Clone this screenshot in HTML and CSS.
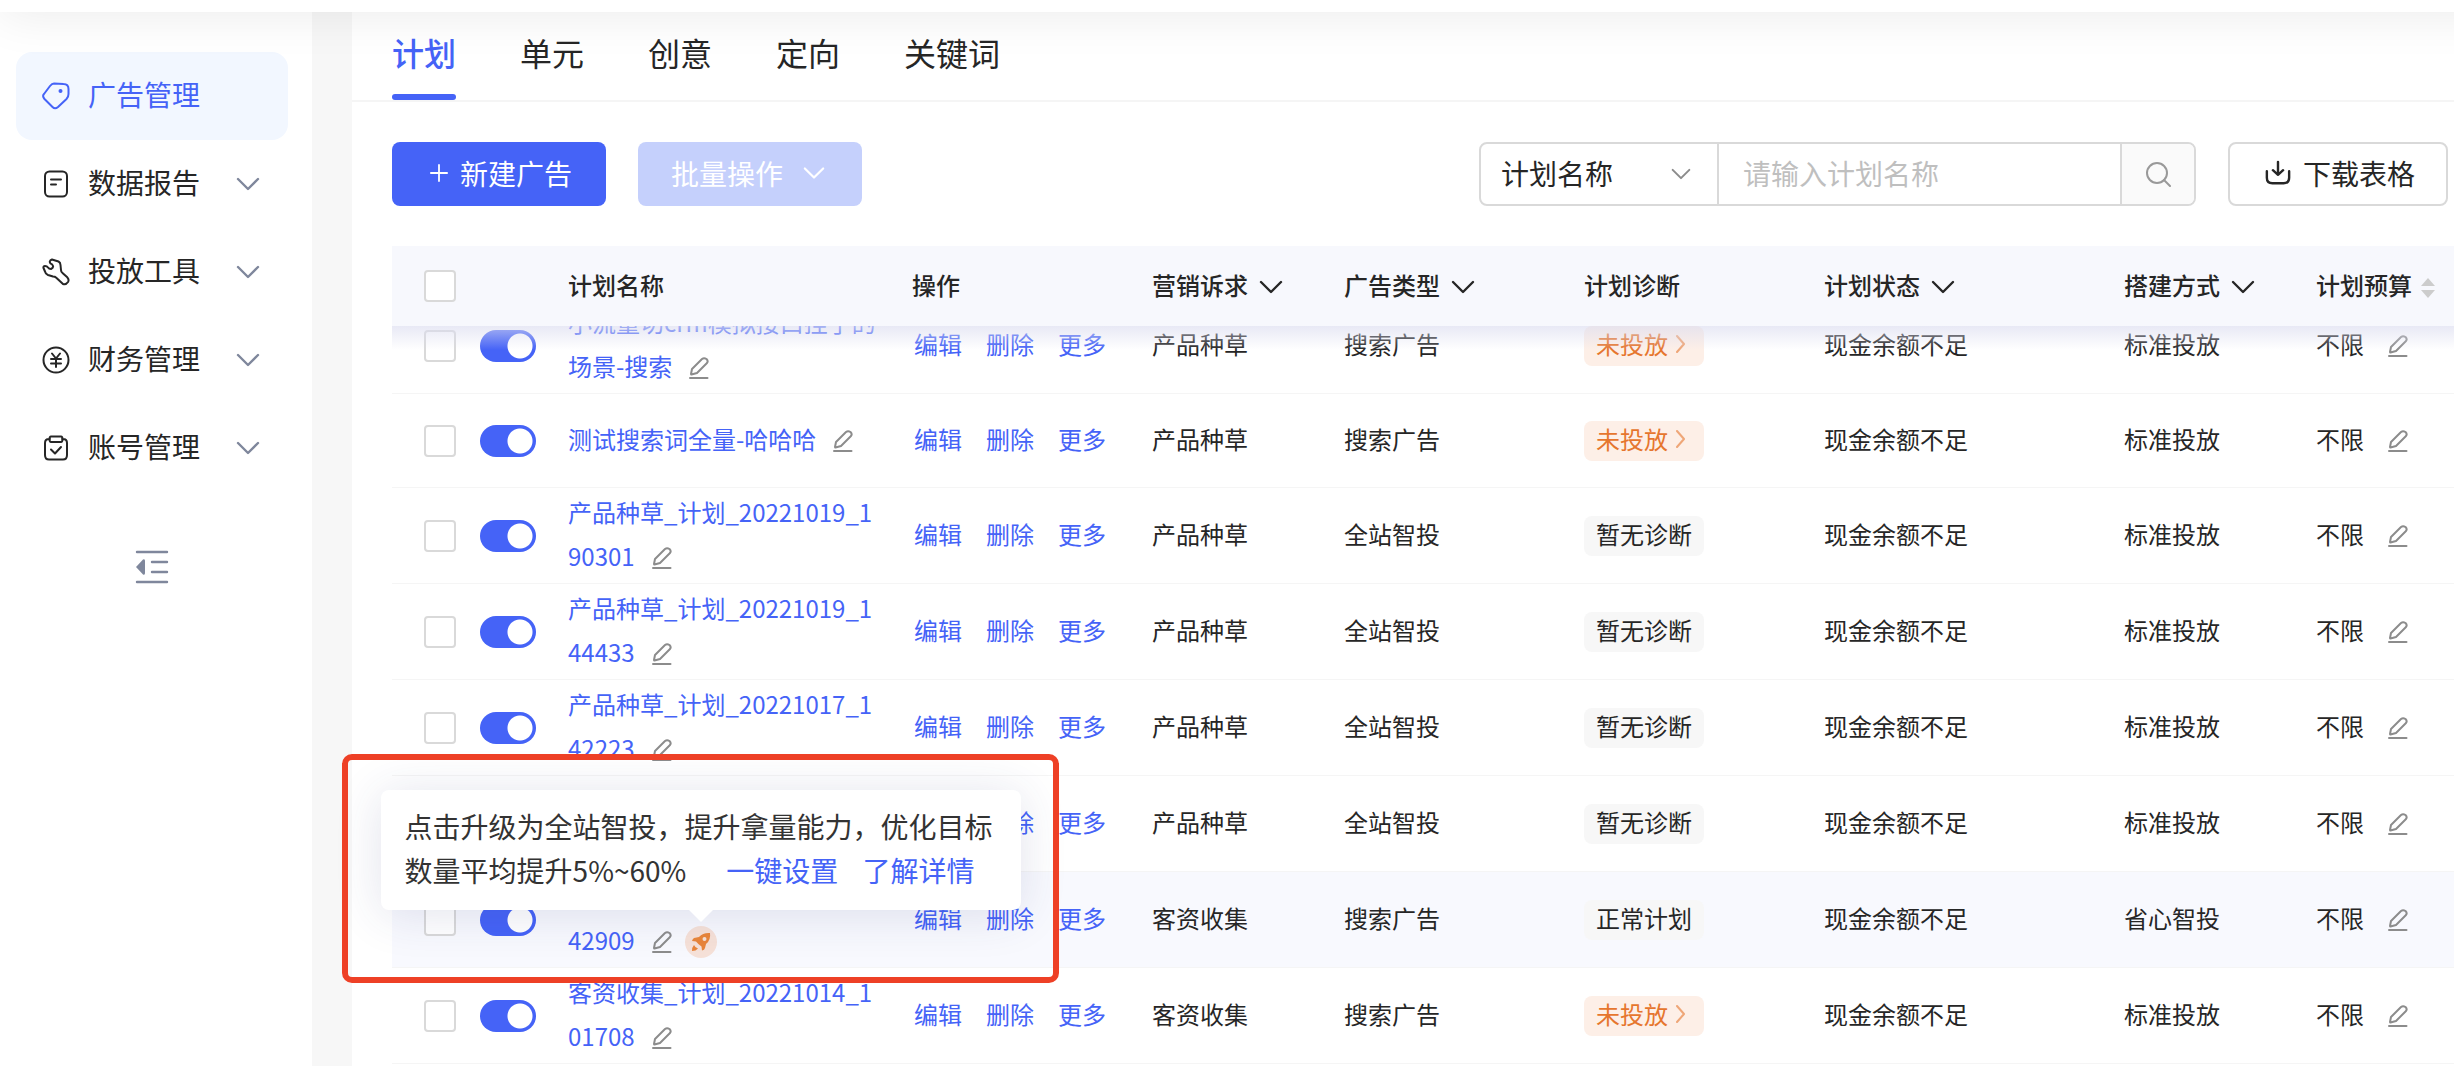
FILE: index.html
```html
<!DOCTYPE html>
<html lang="zh-CN">
<head>
<meta charset="utf-8">
<title>广告管理</title>
<meta name="viewport" content="width=device-width, initial-scale=1">
<link rel="stylesheet" href="styles.css">
</head>
<body>
<svg class="sprite" aria-hidden="true">
  <symbol id="i-chevron" viewBox="0 0 24 24"><path stroke-width="2.4" d="M2 7l10 10L22 7"/></symbol>
  <symbol id="i-right" viewBox="0 0 10 18"><path d="M1 1l7 8-7 8"/></symbol>
  <symbol id="i-edit" viewBox="0 0 20 22"><path d="M3 12L13 2Q15 .5 17.500 2Q19.500 4 18 6L8 16L2.500 17.500Q2 17.500 2 17ZM1 21H18.500"/></symbol>
  <symbol id="i-tag" viewBox="0 0 28 28"><path d="M12 1.500L21.500 2C24.500 2 26.500 4 26.500 7V12Q26.500 15 24.500 17L16 25Q13 27.500 10.500 25L2.500 17Q0 14 2 12L8 4Q10 1.500 12 1.500Z"/><circle class="dot" cx="18.500" cy="9" r="2"/></symbol>
  <symbol id="i-report" viewBox="0 0 28 28"><rect x="3" y="1.500" width="22" height="25" rx="4.500"/><path d="M9 9.500H19M9 14.500H14"/></symbol>
  <symbol id="i-tool" viewBox="0 0 28 28"><path d="M10 1.500L16.500 3.500Q18.500 4.500 18.500 7L19 12Q19 14 20.500 15L25 19Q27.500 21.500 26 24Q24 27 21 26L14 19.500Q13 18.500 11 18.500L6 17Q3.500 16 3 13.500L1.500 10Q1 8 3 8Q5 8 6 9.500T9 11Q11.500 10 11 8T8.500 5.500Q6.500 3 10 1.500Z"/></symbol>
  <symbol id="i-money" viewBox="0 0 28 28"><circle cx="14" cy="14" r="12.500"/><path d="M10 7.500L14 12.500L18 7.500M9 13H19M9 17.500H19M14 12.500V21"/></symbol>
  <symbol id="i-account" viewBox="0 0 28 28"><path d="M8 5H7Q3 5 3 9V21Q3 25.500 7 25.500H21Q25 25.500 25 21V9Q25 5 21 5H20M9 2.500H19Q20.500 2.500 20.500 5Q20.500 8 19 8H9Q7.500 8 7.500 5Q7.500 2.500 9 2.500ZM9 15.500L13 19.500L19 13"/></symbol>
  <symbol id="i-collapse" viewBox="0 0 34 34"><path stroke-width="2.400" d="M2 2H32M17 12H32M17 22H32M2 32H32"/><path class="solid" d="M1 17L8 9.500Q10 8.500 10 11V23Q10 25.500 8 24.500Z"/></symbol>
  <symbol id="i-plus" viewBox="0 0 20 20"><path d="M10 1V19M1 10H19"/></symbol>
  <symbol id="i-search" viewBox="0 0 26 26"><circle cx="12" cy="12" r="10"/><path d="M19 19L25 25"/></symbol>
  <symbol id="i-download" viewBox="0 0 28 28"><path stroke-width="2.600" d="M2 12V19Q2 25 8 25H20Q26 25 26 19V12M14 2V16M8.500 11L14 16L19.500 11"/></symbol>
  <symbol id="i-rocket" viewBox="0 0 20 20"><path d="M19 1Q12 .5 8 5L3 6Q1.500 7 1 9L5 9.500Q7 12 10.500 14.500L11 18.500Q13.500 18 14 16L15 12Q20 8 19 1ZM13.500 5A2 2 0 1 1 13.500 9A2 2 0 1 1 13.500 5ZM3 13Q1 15 1 19Q5 19 7 16.500Q4 15.500 3 13Z"/></symbol>
  <symbol id="i-sort" viewBox="0 0 14 20"><path d="M7 0L14 8H0ZM0 12H14L7 20Z"/></symbol>
</svg>

<header class="topbar"></header>

<div class="shell">
  <aside class="sidebar">
    <nav class="menu">
      <a class="menu-item active" href="#ads"><svg class="icon menu-icon"><use href="#i-tag"/></svg><span>广告管理</span></a>
      <a class="menu-item" href="#report"><svg class="icon menu-icon"><use href="#i-report"/></svg><span>数据报告</span><svg class="icon menu-arrow"><use href="#i-chevron"/></svg></a>
      <a class="menu-item" href="#tools"><svg class="icon menu-icon"><use href="#i-tool"/></svg><span>投放工具</span><svg class="icon menu-arrow"><use href="#i-chevron"/></svg></a>
      <a class="menu-item" href="#finance"><svg class="icon menu-icon"><use href="#i-money"/></svg><span>财务管理</span><svg class="icon menu-arrow"><use href="#i-chevron"/></svg></a>
      <a class="menu-item" href="#account"><svg class="icon menu-icon"><use href="#i-account"/></svg><span>账号管理</span><svg class="icon menu-arrow"><use href="#i-chevron"/></svg></a>
    </nav>
    <button class="collapse" type="button" aria-label="收起菜单"><svg class="icon"><use href="#i-collapse"/></svg></button>
  </aside>

  <main class="main">
    <nav class="tabs">
      <a class="tab active" href="#plan">计划</a>
      <a class="tab" href="#unit">单元</a>
      <a class="tab" href="#creative">创意</a>
      <a class="tab" href="#target">定向</a>
      <a class="tab" href="#keyword">关键词</a>
    </nav>

    <div class="toolbar">
      <button class="btn primary" type="button"><svg class="icon plus"><use href="#i-plus"/></svg>新建广告</button>
      <button class="btn batch" type="button" disabled>批量操作<svg class="icon btn-arrow"><use href="#i-chevron"/></svg></button>
      <form class="search">
        <span class="field">
          <select aria-label="搜索字段"><option>计划名称</option></select>
          <svg class="icon field-arrow"><use href="#i-chevron"/></svg>
        </span>
        <input type="text" placeholder="请输入计划名称" aria-label="计划名称">
        <button type="button" aria-label="搜索"><svg class="icon"><use href="#i-search"/></svg></button>
      </form>
      <button class="btn download" type="button"><svg class="icon"><use href="#i-download"/></svg>下载表格</button>
    </div>

    <div class="grid">
      <div class="grid-head">
        <table>
          <colgroup><col class="c-check"><col class="c-switch"><col class="c-name"><col class="c-ops"><col class="c-goal"><col class="c-type"><col class="c-diag"><col class="c-state"><col class="c-build"><col></colgroup>
          <thead>
            <tr>
              <th class="control"><input class="check" type="checkbox" aria-label="全选"></th>
              <th></th>
              <th>计划名称</th>
              <th>操作</th>
              <th>营销诉求<svg class="icon th-arrow"><use href="#i-chevron"/></svg></th>
              <th>广告类型<svg class="icon th-arrow"><use href="#i-chevron"/></svg></th>
              <th>计划诊断</th>
              <th>计划状态<svg class="icon th-arrow"><use href="#i-chevron"/></svg></th>
              <th>搭建方式<svg class="icon th-arrow"><use href="#i-chevron"/></svg></th>
              <th>计划预算<svg class="icon sorter"><use href="#i-sort"/></svg></th>
            </tr>
          </thead>
        </table>
      </div>

      <table class="grid-body">
        <colgroup><col class="c-check"><col class="c-switch"><col class="c-name"><col class="c-ops"><col class="c-goal"><col class="c-type"><col class="c-diag"><col class="c-state"><col class="c-build"><col></colgroup>
        <tbody>
          <tr>
            <td class="control"><input class="check" type="checkbox" aria-label="选择计划"></td>
            <td class="control"><input class="switch" type="checkbox" role="switch" aria-label="启用计划" checked></td>
            <td class="name"><a href="#p1">小流量切crm模拟接口挂了的场景-搜索</a><button class="edit" type="button" aria-label="修改名称"><svg class="icon"><use href="#i-edit"/></svg></button></td>
            <td><div class="ops"><a href="#e">编辑</a><a href="#d">删除</a><a href="#m">更多</a></div></td>
            <td>产品种草</td><td>搜索广告</td>
            <td class="control"><a class="badge warn" href="#why">未投放<svg class="icon"><use href="#i-right"/></svg></a></td>
            <td>现金余额不足</td><td>标准投放</td>
            <td>不限<button class="edit" type="button" aria-label="修改预算"><svg class="icon"><use href="#i-edit"/></svg></button></td>
          </tr>
          <tr class="single">
            <td class="control"><input class="check" type="checkbox" aria-label="选择计划"></td>
            <td class="control"><input class="switch" type="checkbox" role="switch" aria-label="启用计划" checked></td>
            <td class="name"><a href="#p2">测试搜索词全量-哈哈哈</a><button class="edit" type="button" aria-label="修改名称"><svg class="icon"><use href="#i-edit"/></svg></button></td>
            <td><div class="ops"><a href="#e">编辑</a><a href="#d">删除</a><a href="#m">更多</a></div></td>
            <td>产品种草</td><td>搜索广告</td>
            <td class="control"><a class="badge warn" href="#why">未投放<svg class="icon"><use href="#i-right"/></svg></a></td>
            <td>现金余额不足</td><td>标准投放</td>
            <td>不限<button class="edit" type="button" aria-label="修改预算"><svg class="icon"><use href="#i-edit"/></svg></button></td>
          </tr>
          <tr>
            <td class="control"><input class="check" type="checkbox" aria-label="选择计划"></td>
            <td class="control"><input class="switch" type="checkbox" role="switch" aria-label="启用计划" checked></td>
            <td class="name"><a href="#p3">产品种草_计划_20221019_190301</a><button class="edit" type="button" aria-label="修改名称"><svg class="icon"><use href="#i-edit"/></svg></button></td>
            <td><div class="ops"><a href="#e">编辑</a><a href="#d">删除</a><a href="#m">更多</a></div></td>
            <td>产品种草</td><td>全站智投</td>
            <td class="control"><span class="badge">暂无诊断</span></td>
            <td>现金余额不足</td><td>标准投放</td>
            <td>不限<button class="edit" type="button" aria-label="修改预算"><svg class="icon"><use href="#i-edit"/></svg></button></td>
          </tr>
          <tr>
            <td class="control"><input class="check" type="checkbox" aria-label="选择计划"></td>
            <td class="control"><input class="switch" type="checkbox" role="switch" aria-label="启用计划" checked></td>
            <td class="name"><a href="#p4">产品种草_计划_20221019_144433</a><button class="edit" type="button" aria-label="修改名称"><svg class="icon"><use href="#i-edit"/></svg></button></td>
            <td><div class="ops"><a href="#e">编辑</a><a href="#d">删除</a><a href="#m">更多</a></div></td>
            <td>产品种草</td><td>全站智投</td>
            <td class="control"><span class="badge">暂无诊断</span></td>
            <td>现金余额不足</td><td>标准投放</td>
            <td>不限<button class="edit" type="button" aria-label="修改预算"><svg class="icon"><use href="#i-edit"/></svg></button></td>
          </tr>
          <tr>
            <td class="control"><input class="check" type="checkbox" aria-label="选择计划"></td>
            <td class="control"><input class="switch" type="checkbox" role="switch" aria-label="启用计划" checked></td>
            <td class="name"><a href="#p5">产品种草_计划_20221017_142223</a><button class="edit" type="button" aria-label="修改名称"><svg class="icon"><use href="#i-edit"/></svg></button></td>
            <td><div class="ops"><a href="#e">编辑</a><a href="#d">删除</a><a href="#m">更多</a></div></td>
            <td>产品种草</td><td>全站智投</td>
            <td class="control"><span class="badge">暂无诊断</span></td>
            <td>现金余额不足</td><td>标准投放</td>
            <td>不限<button class="edit" type="button" aria-label="修改预算"><svg class="icon"><use href="#i-edit"/></svg></button></td>
          </tr>
          <tr>
            <td class="control"><input class="check" type="checkbox" aria-label="选择计划"></td>
            <td class="control"><input class="switch" type="checkbox" role="switch" aria-label="启用计划" checked></td>
            <td class="name"></td>
            <td><div class="ops"><a href="#e">编辑</a><a href="#d">删除</a><a href="#m">更多</a></div></td>
            <td>产品种草</td><td>全站智投</td>
            <td class="control"><span class="badge">暂无诊断</span></td>
            <td>现金余额不足</td><td>标准投放</td>
            <td>不限<button class="edit" type="button" aria-label="修改预算"><svg class="icon"><use href="#i-edit"/></svg></button></td>
          </tr>
          <tr class="hover">
            <td class="control"><input class="check" type="checkbox" aria-label="选择计划"></td>
            <td class="control"><input class="switch" type="checkbox" role="switch" aria-label="启用计划" checked></td>
            <td class="name"><a href="#p7">客资收集_计划_20221014_142909</a><button class="edit" type="button" aria-label="修改名称"><svg class="icon"><use href="#i-edit"/></svg></button><span class="boost"><svg class="rocket"><use href="#i-rocket"/></svg><span class="tip" role="tooltip">点击升级为全站智投，提升拿量能力，优化目标数量平均提升5%~60%<a class="tip-set" href="#set">一键设置</a><a class="tip-more" href="#more">了解详情</a></span></span></td>
            <td><div class="ops"><a href="#e">编辑</a><a href="#d">删除</a><a href="#m">更多</a></div></td>
            <td>客资收集</td><td>搜索广告</td>
            <td class="control"><span class="badge">正常计划</span></td>
            <td>现金余额不足</td><td>省心智投</td>
            <td>不限<button class="edit" type="button" aria-label="修改预算"><svg class="icon"><use href="#i-edit"/></svg></button></td>
          </tr>
          <tr>
            <td class="control"><input class="check" type="checkbox" aria-label="选择计划"></td>
            <td class="control"><input class="switch" type="checkbox" role="switch" aria-label="启用计划" checked></td>
            <td class="name"><a href="#p8">客资收集_计划_20221014_101708</a><button class="edit" type="button" aria-label="修改名称"><svg class="icon"><use href="#i-edit"/></svg></button></td>
            <td><div class="ops"><a href="#e">编辑</a><a href="#d">删除</a><a href="#m">更多</a></div></td>
            <td>客资收集</td><td>搜索广告</td>
            <td class="control"><a class="badge warn" href="#why">未投放<svg class="icon"><use href="#i-right"/></svg></a></td>
            <td>现金余额不足</td><td>标准投放</td>
            <td>不限<button class="edit" type="button" aria-label="修改预算"><svg class="icon"><use href="#i-edit"/></svg></button></td>
          </tr>
        </tbody>
      </table>
      <div class="callout"></div>
    </div>
  </main>
</div>
</body>
</html>
```

FILE: styles.css
```css
:root {
  --blue: #4563f7;
  --text: #262626;
  --line: #d9d9d9;
  --slate: #7f879c;
}

* { box-sizing: border-box; }

body {
  margin: 0;
  height: 100vh;
  overflow: hidden;
  display: flex;
  flex-direction: column;
  background: #f7f7f7;
  color: var(--text);
  font: 24px/44px "Noto Sans CJK SC", "Noto Sans", sans-serif;
}

a { color: inherit; text-decoration: none; }

button, input, select { margin: 0; font: inherit; color: inherit; }

button { border: 0; padding: 0; background: none; }

.sprite { display: none; }

.icon {
  flex: none;
  fill: none;
  stroke: currentColor;
  stroke-width: 2;
  stroke-linecap: round;
  stroke-linejoin: round;
}

.icon .dot, .dot, .solid { fill: currentColor; stroke: none; }

/* the bar is scrolled mostly out of view; only its foot and shadow show */
.topbar {
  flex: none;
  position: relative;
  z-index: 5;
  height: 120px;
  margin: -108px -48px 0 0;
  background: #fff;
  box-shadow: 0 4px 48px rgba(0, 0, 0, .08);
  pointer-events: none;
}

.shell { flex: 1; display: flex; gap: 40px; }

/* sidebar */
.sidebar {
  flex: none;
  width: 312px;
  padding: 40px 24px 0 16px;
  background: #fff;
  display: flex;
  flex-direction: column;
  align-items: center;
}

.menu { width: 100%; font-size: 28px; }

.menu-item {
  display: flex;
  align-items: center;
  gap: 18px;
  height: 88px;
  padding: 0 28px 0 26px;
  border-radius: 16px;
}

.menu-item span { padding-bottom: 4px; }

.menu-item.active { background: #f2f7ff; color: var(--blue); }

.menu-icon { width: 28px; height: 28px; }

.menu-arrow { width: 24px; height: 24px; margin-left: auto; color: var(--slate); }

.collapse { margin-top: 58px; height: 34px; color: var(--slate); }

.collapse svg { display: block; width: 34px; height: 34px; }

/* main */
.main { flex: 1; min-width: 0; background: #fff; }

.tabs {
  display: flex;
  gap: 64px;
  padding-left: 40px;
  border-bottom: 2px solid #f5f5f5;
  font-size: 32px;
}

.tab { position: relative; height: 88px; padding-top: 18px; }

.tab.active { color: var(--blue); font-weight: 500; }

.tab.active::after {
  content: "";
  position: absolute;
  left: 0;
  right: 0;
  bottom: 0;
  height: 6px;
  border-radius: 3px;
  background: var(--blue);
}

.toolbar {
  display: flex;
  align-items: center;
  padding: 40px 6px 40px 40px;
  font-size: 28px;
}

.btn {
  flex: none;
  display: flex;
  align-items: center;
  justify-content: center;
  height: 64px;
  padding-bottom: 3px;
  border-radius: 8px;
}

.primary { width: 214px; gap: 12px; padding-left: 4px; background: var(--blue); color: #fff; }

.plus { width: 18px; height: 18px; }

.batch { width: 224px; gap: 20px; padding-right: 4px; margin-left: 32px; background: #c5d0fc; color: #fff; }

.btn-arrow { width: 22px; height: 22px; }

.search {
  display: flex;
  width: 717px;
  height: 64px;
  margin-left: auto;
  border: 2px solid var(--line);
  border-radius: 8px;
  overflow: hidden;
}

.field { position: relative; flex: none; width: 236px; }

.field select {
  width: 100%;
  height: 100%;
  padding: 0 20px 3px;
  border: 0;
  appearance: none;
  background: none;
}

.field-arrow {
  position: absolute;
  right: 26px;
  top: 20px;
  width: 20px;
  height: 20px;
  color: #8c8c8c;
  pointer-events: none;
}

.search input {
  flex: 1;
  min-width: 0;
  padding: 0 24px 3px;
  border: solid var(--line);
  border-width: 0 2px;
}

.search input::placeholder { color: #bfbfbf; }

.search button {
  flex: none;
  width: 72px;
  display: grid;
  place-items: center;
  background: #fafafa;
  color: #999;
}

.search button svg { width: 26px; height: 26px; }

.download {
  width: 220px;
  gap: 12px;
  padding-left: 4px;
  margin-left: 32px;
  border: 2px solid var(--line);
  background: #fff;
}

.download svg { width: 26px; height: 26px; }

/* table */
.grid { position: relative; margin-left: 40px; }

table { width: 100%; table-layout: fixed; border-collapse: separate; border-spacing: 0; }

th, td { padding: 0 0 3px; text-align: left; white-space: nowrap; vertical-align: middle; }

.control { padding: 0; }

.c-check, .c-switch { width: 88px; }
.c-name { width: 344px; }
.c-ops, .c-type, .c-diag { width: 240px; }
.c-goal, .c-build { width: 192px; }
.c-state { width: 300px; }

.grid-head { position: relative; z-index: 2; background: #f7f8fd; }

.grid-head::after {
  content: "";
  position: absolute;
  inset: 100% 0 auto;
  height: 24px;
  background: linear-gradient(rgba(220, 221, 240, .65), rgba(250, 250, 255, 0));
}

th { height: 80px; font-weight: 500; }

.th-arrow { width: 24px; height: 24px; margin-left: 11px; vertical-align: -4px; }

.icon.sorter { width: 14px; height: 20px; margin-left: 9px; vertical-align: -3px; fill: #ccc; stroke: none; }

/* first row is partly scrolled under the head */
.grid-body { margin-top: -28px; }

td { height: 96px; border-bottom: 1px solid #f5f5f5; }

.single td { height: 94px; }

.hover td { background: #f8f9fe; }

.check {
  display: block;
  width: 32px;
  height: 32px;
  margin-left: 32px;
  appearance: none;
  border: 2px solid var(--line);
  border-radius: 4px;
  background: #fff;
}

.switch {
  display: block;
  width: 56px;
  height: 32px;
  appearance: none;
  border-radius: 16px;
  background: radial-gradient(circle at 40px 16px, #fff 12px, transparent 13px) var(--blue);
}

.name { padding-right: 32px; white-space: normal; word-break: break-all; }

.name > a, .ops, .tip a { color: var(--blue); }

.ops { display: flex; gap: 24px; padding-left: 2px; }

.edit { margin-left: 17px; color: #8c8c8c; line-height: 22px; vertical-align: -3px; }

.edit svg { display: block; width: 20px; height: 22px; }

td:last-child .edit { margin-left: 24px; }

.badge {
  display: flex;
  align-items: center;
  gap: 8px;
  width: 120px;
  height: 40px;
  padding: 0 12px 3px;
  border-radius: 8px;
  background: #f7f7f7;
}

.badge.warn { background: #fdefe7; color: #e6762e; }

.badge svg { width: 10px; height: 18px; opacity: .6; }

.boost {
  position: relative;
  display: inline-grid;
  place-items: center;
  width: 32px;
  height: 32px;
  margin-left: 13px;
  border-radius: 50%;
  background: #f6e1d8;
  vertical-align: -2px;
}

.rocket { width: 20px; height: 20px; fill: #e9853a; fill-rule: evenodd; }

.tip {
  position: absolute;
  z-index: 3;
  left: -304px;
  bottom: 48px;
  width: 640px;
  padding: 14px 24px 18px;
  border-radius: 8px;
  background: #fff;
  box-shadow: 0 4px 48px rgba(50, 60, 120, .14);
  font-size: 28px;
  color: #333;
}

.tip::after {
  content: "";
  position: absolute;
  left: 308px;
  top: 100%;
  border: solid transparent;
  border-width: 12px 12px 0;
  border-top-color: #fff;
}

.tip-set { margin-left: 40px; }

.tip-more { margin-left: 24px; }

.callout {
  position: absolute;
  z-index: 4;
  left: -50px;
  top: 508px;
  width: 717px;
  height: 229px;
  border: 6px solid #ee4026;
  border-radius: 10px;
  pointer-events: none;
}
```
